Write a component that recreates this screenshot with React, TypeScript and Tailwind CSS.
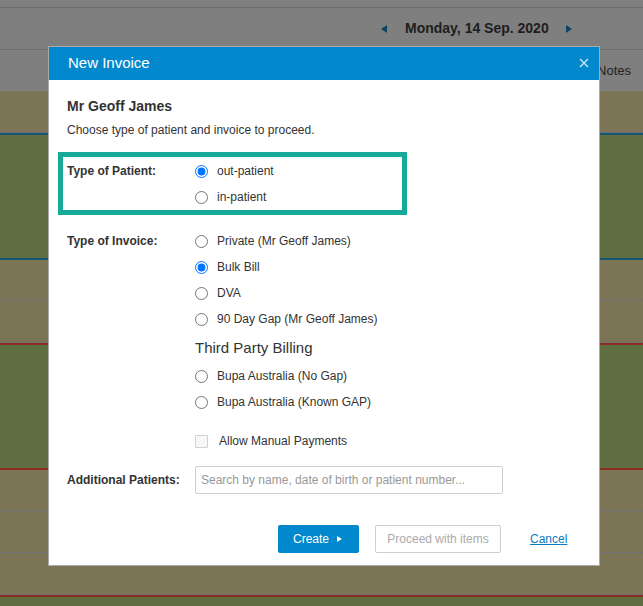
import React from "react";

const font = { fontFamily: '"Liberation Sans", Arial, sans-serif' };

function Radio({ checked, label }: { checked?: boolean; label: string }) {
  return (
    <label className="flex items-center h-[26px] text-[12px] text-[#333]">
      <input
        type="radio"
        defaultChecked={checked}
        className="m-0 w-[13px] h-[13px] mr-[9px] accent-[#0075ff]"
      />
      <span>{label}</span>
    </label>
  );
}

export default function App() {
  return (
    <div className="relative w-[643px] h-[606px] overflow-hidden bg-[#7f7f7f]" style={font}>
      {/* top bar */}
      <div className="h-[8px] border-b border-[#6c6c6c]" />
      <div className="h-[42px] border-b border-[#6c6c6c] flex items-center pl-[381px]">
        <span className="w-0 h-0 border-y-[4px] border-y-transparent border-r-[6px] border-r-[#0d4562]" />
        <span className="ml-[18px] text-[14px] font-bold text-[#1e1e1e]">Monday, 14 Sep. 2020</span>
        <span className="ml-[17px] w-0 h-0 border-y-[4px] border-y-transparent border-l-[6px] border-l-[#0d4562]" />
      </div>
      <div className="h-[41px] flex items-center justify-end pr-[12px]">
        <span className="text-[13px] text-[#222] mt-[1px]">Notes</span>
      </div>
      {/* calendar rows */}
      <div className="h-[42px] bg-[#7b7455] border-b border-dotted border-[#6d6d72]" />
      <div className="h-[2px] bg-[#155473]" />
      <div className="h-[123px] bg-[#5f6e41]" />
      <div className="h-[2px] bg-[#155473]" />
      <div className="h-[41px] bg-[#7b7455] border-b border-dotted border-[#6d6d72]" />
      <div className="h-[42px] bg-[#7b7455] border-b border-dotted border-[#6d6d72]" />
      <div className="h-[2px] bg-[#8a2d1f]" />
      <div className="h-[123px] bg-[#5f6e41]" />
      <div className="h-[2px] bg-[#8a2d1f]" />
      <div className="h-[41px] bg-[#7b7455] border-b border-dotted border-[#6d6d72]" />
      <div className="h-[42px] bg-[#7b7455] border-b border-dotted border-[#6d6d72]" />
      <div className="h-[42px] bg-[#7b7455] border-b border-dotted border-[#6d6d72]" />
      <div className="h-[2px] bg-[#8a2d1f]" />
      <div className="h-[10px] bg-[#5f6e41]" />

      {/* modal */}
      <div className="absolute left-[48px] top-[46px] w-[552px] h-[520px] bg-white border border-[#a9a9a9] flex flex-col">
        <div className="h-[33px] bg-[#0288cc] flex items-center justify-between pl-[19px] pr-[10px]">
          <span className="text-[15px] text-white">New Invoice</span>
          <svg width="10" height="10" viewBox="0 0 10 10" className="mt-[-2px]">
            <path d="M1 1 L9 9 M9 1 L1 9" stroke="#d4eaf6" strokeWidth="1.3" fill="none" />
          </svg>
        </div>
        <div className="pl-[18px] pt-[16px]">
          <div className="text-[14px] leading-[20px] font-bold text-[#333]">Mr Geoff James</div>
          <div className="mt-[6px] text-[12px] leading-[16px] text-[#333]">
            Choose type of patient and invoice to proceed.
          </div>

          <div className="mt-[14px] -ml-[9px] w-[349px] h-[63px] border-[5px] border-[#16aa98] pl-[4px] pt-[1px] flex">
            <div className="w-[128px] h-[26px] flex items-center text-[12px] font-bold text-[#333]">Type of Patient:</div>
            <div className="flex flex-col">
              <Radio checked label="out-patient" />
              <Radio label="in-patient" />
            </div>
          </div>

          <div className="mt-[13px] flex">
            <div className="w-[128px] h-[26px] flex items-center text-[12px] font-bold text-[#333]">Type of Invoice:</div>
            <div className="flex flex-col">
              <Radio label="Private (Mr Geoff James)" />
              <Radio checked label="Bulk Bill" />
              <Radio label="DVA" />
              <Radio label="90 Day Gap (Mr Geoff James)" />
              <div className="mt-[6px] text-[15px] leading-[20px] text-[#333]">Third Party Billing</div>
              <div className="mt-[5px]">
                <Radio label="Bupa Australia (No Gap)" />
                <Radio label="Bupa Australia (Known GAP)" />
              </div>
              <label className="mt-[13px] flex items-center h-[26px] text-[12px] text-[#333]">
                <span className="w-[13px] h-[13px] border border-[#cfcfcf] bg-[#f7f7f7] rounded-[1px] mr-[11px]" />
                <span>Allow Manual Payments</span>
              </label>
            </div>
          </div>

          <div className="mt-[12px] flex items-center h-[28px]">
            <div className="w-[128px] text-[12px] font-bold text-[#333]">Additional Patients:</div>
            <input
              className="w-[308px] h-[28px] border border-[#cfcfcf] rounded-[2px] px-[5px] text-[12px] outline-none placeholder:text-[#999]"
              placeholder="Search by name, date of birth or patient number..."
            />
          </div>
        </div>

        <div className="mt-[31px] flex items-center pl-[229px]">
          <button className="w-[81px] h-[28px] bg-[#0288cc] rounded-[2px] text-white text-[12px] flex items-center justify-center pr-[2px]">
            <span>Create</span>
            <span className="ml-[8px] w-0 h-0 border-y-[3px] border-y-transparent border-l-[5px] border-l-white" />
          </button>
          <button className="ml-[16px] w-[126px] h-[28px] border border-[#cfcfcf] rounded-[2px] bg-white text-[12px] text-[#aaa]">
            Proceed with items
          </button>
          <a className="ml-[29px] text-[12px] text-[#0a7cc1] underline cursor-pointer">Cancel</a>
        </div>
      </div>
    </div>
  );
}
